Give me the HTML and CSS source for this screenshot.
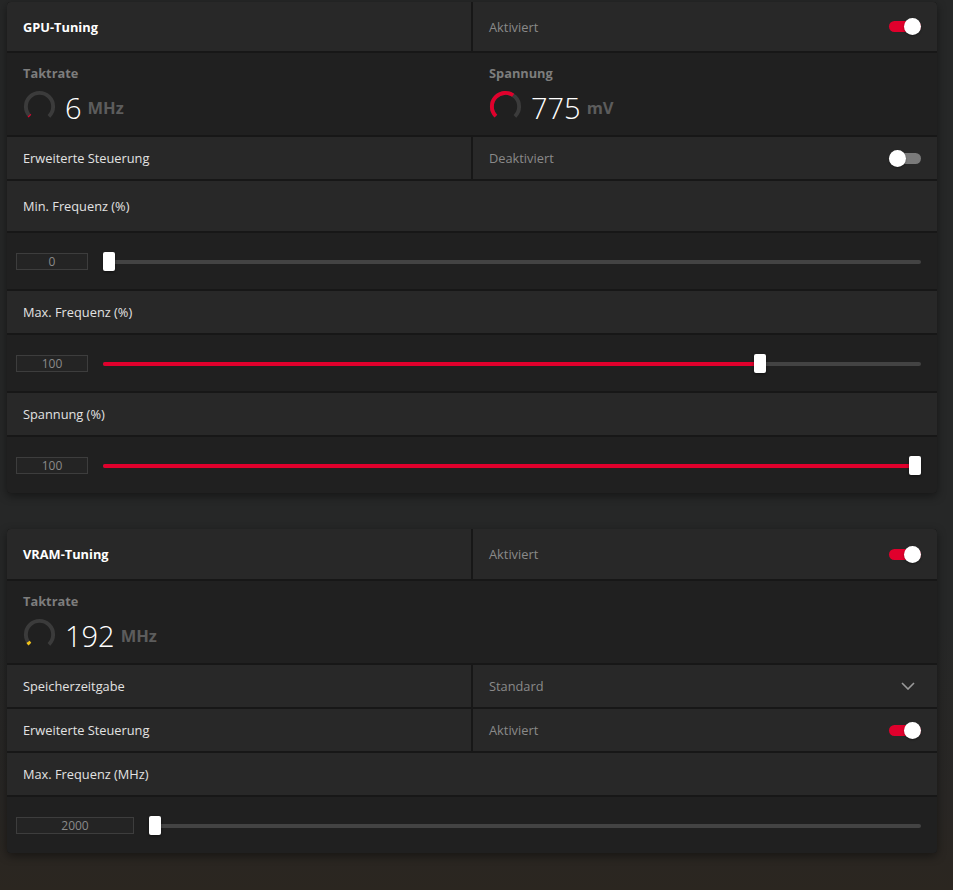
FILE: index.html
```html
<!DOCTYPE html>
<html lang="de">
<head>
<meta charset="utf-8">
<title>Tuning</title>
<link rel="stylesheet" href="styles.css">
</head>
<body>
<div class="page">
  <section class="card gpu">
    <div class="row split head">
      <div class="cell"><span class="title">GPU-Tuning</span></div>
      <div class="cell between"><span class="state">Aktiviert</span><span class="toggle on"></span></div>
    </div>
    <div class="row split metric">
      <div class="cell metric-cell">
        <div class="metric-label">Taktrate</div>
        <div class="metric-value">
          <svg class="gauge" viewBox="0 0 36 36"><circle class="track" cx="18" cy="18" r="14"/><circle class="arc red" cx="18" cy="18" r="14" style="stroke-dasharray:1.2 88"/></svg>
          <span class="num">6</span><span class="unit">MHz</span>
        </div>
      </div>
      <div class="cell metric-cell">
        <div class="metric-label">Spannung</div>
        <div class="metric-value">
          <svg class="gauge" viewBox="0 0 36 36"><circle class="track" cx="18" cy="18" r="14"/><circle class="arc red" cx="18" cy="18" r="14" style="stroke-dasharray:41 88"/></svg>
          <span class="num">775</span><span class="unit">mV</span>
        </div>
      </div>
    </div>
    <div class="row split line">
      <div class="cell"><span class="text">Erweiterte Steuerung</span></div>
      <div class="cell between"><span class="state">Deaktiviert</span><span class="toggle"></span></div>
    </div>
    <div class="row label tall"><span class="text">Min. Frequenz (%)</span></div>
    <div class="row slider-row">
      <div class="valbox">0</div>
      <div class="slider" style="--v:0"><div class="fill"></div><div class="thumb"></div></div>
    </div>
    <div class="row label"><span class="text">Max. Frequenz (%)</span></div>
    <div class="row slider-row">
      <div class="valbox">100</div>
      <div class="slider" style="--v:0.808"><div class="fill"></div><div class="thumb"></div></div>
    </div>
    <div class="row label"><span class="text">Spannung (%)</span></div>
    <div class="row slider-row">
      <div class="valbox">100</div>
      <div class="slider" style="--v:1"><div class="fill"></div><div class="thumb"></div></div>
    </div>
  </section>

  <section class="card vram">
    <div class="row split head">
      <div class="cell"><span class="title">VRAM-Tuning</span></div>
      <div class="cell between"><span class="state">Aktiviert</span><span class="toggle on"></span></div>
    </div>
    <div class="row metric">
      <div class="cell metric-cell">
        <div class="metric-label">Taktrate</div>
        <div class="metric-value">
          <svg class="gauge" viewBox="0 0 36 36"><circle class="track" cx="18" cy="18" r="14"/><circle class="arc yellow" cx="18" cy="18" r="14" style="stroke-dasharray:3 88"/></svg>
          <span class="num">192</span><span class="unit">MHz</span>
        </div>
      </div>
    </div>
    <div class="row split line">
      <div class="cell"><span class="text">Speicherzeitgabe</span></div>
      <div class="cell between"><span class="state">Standard</span>
        <svg class="chevron" viewBox="0 0 14 8"><path d="M1 1 L7 7 L13 1"/></svg>
      </div>
    </div>
    <div class="row split line">
      <div class="cell"><span class="text">Erweiterte Steuerung</span></div>
      <div class="cell between"><span class="state">Aktiviert</span><span class="toggle on"></span></div>
    </div>
    <div class="row label"><span class="text">Max. Frequenz (MHz)</span></div>
    <div class="row slider-row">
      <div class="valbox wide">2000</div>
      <div class="slider" style="--v:0"><div class="fill"></div><div class="thumb"></div></div>
    </div>
  </section>
</div>
</body>
</html>
```

FILE: styles.css
```css
* { box-sizing: border-box; }
html, body { margin: 0; padding: 0; }
body {
  width: 953px;
  height: 890px;
  overflow: hidden;
  background: linear-gradient(180deg, #262727 0%, #262727 70%, #282624 90%, #2b2620 100%);
  font-family: "Open Sans", "Noto Sans", sans-serif;
  font-size: 12.8px;
  color: #e6e6e6;
}
.page {
  padding: 2px 16px 0 7px;
  display: flex;
  flex-direction: column;
  gap: 36px;
}
.card {
  width: 930px;
  background: #171717;
  border-radius: 4px;
  overflow: hidden;
  display: flex;
  flex-direction: column;
  gap: 2px;
  box-shadow: 0 3px 10px rgba(0, 0, 0, 0.45);
}
.row {
  background: #282828;
  display: flex;
  align-items: center;
  padding: 0 16px;
}
.row.split {
  display: grid;
  grid-template-columns: 464px 464px;
  column-gap: 2px;
  align-items: stretch;
  padding: 0;
  background: #171717;
}
.cell {
  background: #282828;
  display: flex;
  align-items: center;
  padding: 0 16px;
}
.cell.between { justify-content: space-between; }
.head { height: 50px; }
.gpu .head { height: 49px; }
.line { height: 42px; }
.label { height: 42px; }
.label.tall { height: 50px; }
.metric { height: 82px; padding: 0; }
.metric .cell, .row.metric { background: #202020; }
.metric-cell {
  flex-direction: column;
  align-items: flex-start;
  justify-content: flex-start;
  padding: 10px 16px 0;
  height: 82px;
  width: 100%;
}
.metric-label {
  font-weight: 700;
  font-size: 12.8px;
  color: #7d7d7d;
  line-height: 20px;
}
.metric-value {
  display: flex;
  align-items: center;
  margin-top: 4px;
  margin-left: -1px;
}
.gauge {
  width: 35px;
  height: 35px;
  margin-right: 8px;
}
.gauge circle {
  fill: none;
  stroke-width: 4;
  transform: rotate(135deg);
  transform-origin: 18px 18px;
}
.gauge .track { stroke: #3b3b3b; stroke-dasharray: 65.97 88; }
.gauge .red { stroke: #e0002c; }
.gauge .yellow { stroke: #f2c318; }
.num {
  font-size: 29px;
  font-weight: 300;
  color: #ffffff;
  line-height: 34px;
  margin-top: 4px;
}
.unit {
  font-size: 16.5px;
  font-weight: 700;
  color: #5c5c5c;
  margin-left: 6px;
  margin-top: 2px;
}
.title { font-weight: 700; color: #ffffff; }
.text { color: #e2e2e2; }
.state { color: #8a8a8a; }
.toggle {
  position: relative;
  width: 32px;
  height: 11px;
  border-radius: 6px;
  background: #7a7a7a;
}
.toggle.on { background: #e0002c; }
.toggle::after {
  content: "";
  position: absolute;
  top: -3px;
  left: 0;
  width: 17px;
  height: 17px;
  border-radius: 50%;
  background: #ffffff;
  box-shadow: 0 1px 2px rgba(0,0,0,0.4);
}
.toggle.on::after { left: auto; right: 0; }
.chevron {
  width: 14px;
  height: 8px;
  margin-right: 6px;
  fill: none;
  stroke: #9a9a9a;
  stroke-width: 1.6;
}
.slider-row {
  height: 56px;
  background: #202020;
  padding: 0 16px 0 9px;
  gap: 15px;
}
.valbox {
  width: 72px;
  height: 17px;
  border: 1px solid #3d3d3d;
  background: #242424;
  color: #8a8a8a;
  font-size: 12px;
  line-height: 15px;
  text-align: center;
}
.valbox.wide { width: 118px; }
.slider {
  position: relative;
  flex: 1;
  height: 19px;
}
.slider::before {
  content: "";
  position: absolute;
  left: 0;
  right: 0;
  top: 8px;
  height: 4px;
  border-radius: 2px;
  background: #434343;
}
.fill {
  position: absolute;
  left: 0;
  top: 8px;
  height: 4px;
  border-radius: 2px;
  background: #e0002c;
  width: calc(var(--v) * (100% - 12px) + 2px);
}
.thumb {
  position: absolute;
  top: 0;
  left: calc(var(--v) * (100% - 12px));
  width: 12px;
  height: 19px;
  border-radius: 2px;
  background: #ffffff;
  box-shadow: 0 1px 3px rgba(0,0,0,0.5);
}
```
